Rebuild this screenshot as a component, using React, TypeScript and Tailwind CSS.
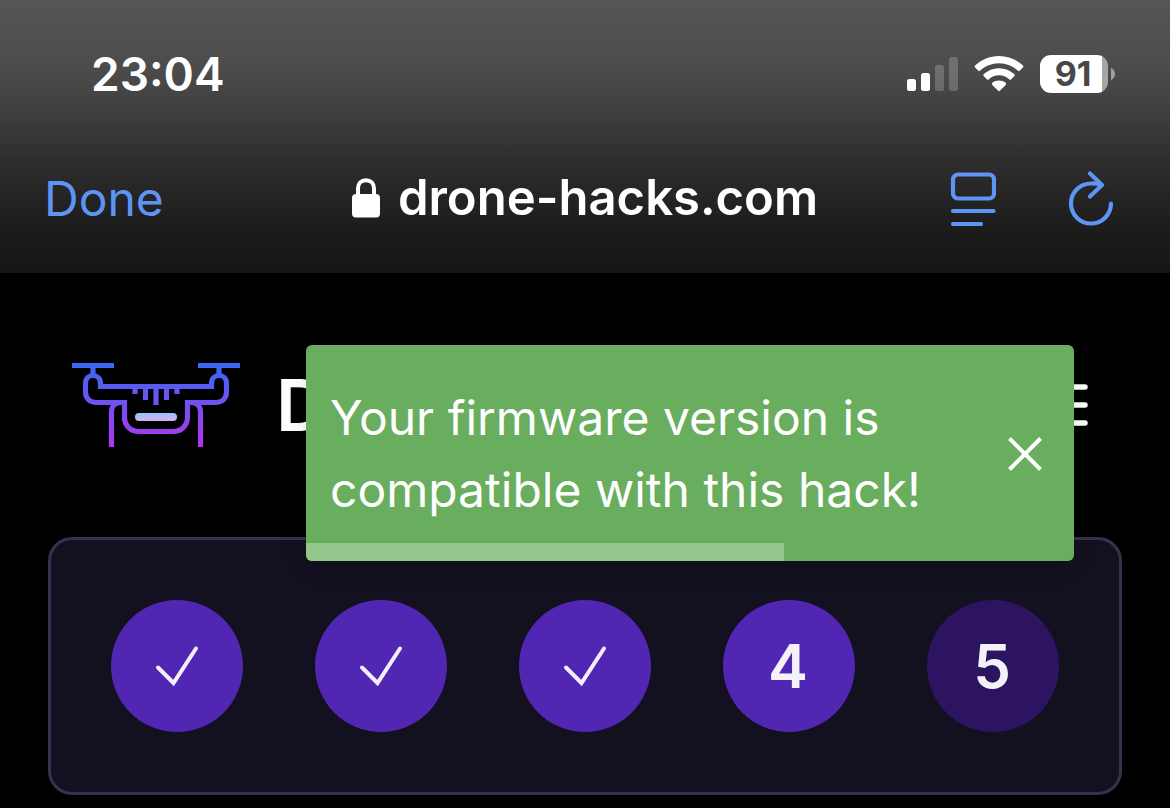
import React from "react";

function SignalIcon() {
  return (
    <svg width="51" height="34" viewBox="0 0 51 34" fill="white" role="img" aria-label="Signal strength">
      <rect x="0" y="22" width="9" height="12" rx="2.5" />
      <rect x="14" y="16" width="9" height="18" rx="2.5" />
      <rect x="28" y="8" width="9" height="26" rx="2.5" opacity="0.2" />
      <rect x="42" y="0" width="9" height="34" rx="2.5" opacity="0.2" />
    </svg>
  );
}

function WifiIcon() {
  return (
    <svg width="50" height="38" viewBox="0 0 50 38" fill="white" role="img" aria-label="Wi-Fi">
      <path d="M25 1C15.700 1 7.300 4.600 1.100 10.500a1.400 1.400 0 0 0 0 2L4.100 15.600a1.500 1.500 0 0 0 2.100 0C11.100 11 17.700 8.200 25 8.200S38.900 11 43.800 15.600a1.500 1.500 0 0 0 2.100 0l3-3.100a1.400 1.400 0 0 0 0-2C42.700 4.600 34.300 1 25 1Z" />
      <path d="M25 13.200c-5.900 0-11.200 2.200-15.200 5.900a1.400 1.400 0 0 0 0 2.100l3 3a1.500 1.500 0 0 0 2.100 0C17.600 21.800 21.100 20.300 25 20.300s7.400 1.500 10.100 3.900a1.500 1.500 0 0 0 2.100 0l3-3a1.400 1.400 0 0 0 0-2.100c-4-3.700-9.300-5.900-15.200-5.900Z" />
      <path d="M25 25.500c-2.500 0-4.900.8-6.700 2.300a1.400 1.400 0 0 0 0 2.100l5.600 5.700a1.500 1.500 0 0 0 2.200 0l5.600-5.700a1.400 1.400 0 0 0 0-2.100C29.900 26.300 27.500 25.500 25 25.500Z" />
    </svg>
  );
}

function Battery() {
  return (
    <div className="flex items-center gap-[3px]">
      <div className="flex h-[38px] w-[68px] items-center justify-center rounded-[11px] bg-[linear-gradient(to_right,#ffffff_91%,#a5a5a5_91%)] pr-0.5 text-[34px] leading-none font-bold text-[#484848]">
        91
      </div>
      <svg width="4" height="12" viewBox="0 0 4 12" fill="#a0a0a0" aria-hidden="true">
        <path d="M0 0C2.500 1 4 3 4 6S2.500 11 0 12Z" />
      </svg>
    </div>
  );
}

function LockIcon() {
  return (
    <svg width="28" height="40" viewBox="0 0 28 40" fill="none" aria-hidden="true">
      <path d="M6 18V10.500C6 5.500 9.200 2.200 14 2.200s8 3.300 8 8.300V18" stroke="white" strokeWidth="4" />
      <rect x="0" y="16" width="28" height="23.500" rx="4" fill="white" />
    </svg>
  );
}

function ReaderIcon() {
  return (
    <svg width="46" height="54" viewBox="0 0 46 54" fill="none" stroke="#5e94f4" strokeWidth="4.2" strokeLinecap="round" aria-hidden="true">
      <rect x="3" y="2.500" width="41" height="24" rx="5" />
      <path d="M3 39H43.500M3 52H31" />
    </svg>
  );
}

function ReloadIcon() {
  return (
    <svg width="46" height="56" viewBox="0 0 46 56" fill="none" stroke="#5e94f4" strokeWidth="4.2" strokeLinecap="round" strokeLinejoin="round" aria-hidden="true">
      <path d="M43 32.500A20 20 0 1 1 23 12.500C27 12.300 30 12.700 33 13.500" />
      <path d="M22 2.500 34 14 22 25.500" />
    </svg>
  );
}

function DroneLogo() {
  return (
    <svg width="168" height="84" viewBox="0 0 168 84" fill="none" role="img" aria-label="Drone logo">
      <defs>
        <linearGradient id="frame" gradientUnits="userSpaceOnUse" x1="0" y1="0" x2="0" y2="84">
          <stop offset="0" stopColor="#366af4" />
          <stop offset="1" stopColor="#b335eb" />
        </linearGradient>
        <linearGradient id="light" gradientUnits="userSpaceOnUse" x1="0" y1="50" x2="0" y2="58">
          <stop offset="0" stopColor="#91c3fb" />
          <stop offset="1" stopColor="#d6b1f1" />
        </linearGradient>
      </defs>
      <g fill="url(#frame)">
        <rect x="0" y="0" width="42" height="5" />
        <rect x="126" y="0" width="42" height="5" />
      </g>
      <g stroke="url(#frame)" strokeWidth="5.2">
        <path d="M21 4V12M147 4V12" />
        <path d="M52.500 57V39.500H24.500C17.500 39.500 13.500 35 13.500 29V20.500C13.500 15.500 17 12.500 21 12.500S28.500 15.500 28.500 20.500V23.500H139.500V20.500C139.500 15.500 143 12.500 147 12.500S154.500 15.500 154.500 20.500V29C154.500 35 150.500 39.500 143.500 39.500H115.500V54C115.500 63 109 68.500 101 68.500H67C59 68.500 52.500 63 52.500 54" />
        <path d="M39.500 84V49C39.500 43 43 39.500 49 39.500M128.500 84V49C128.500 43 125 39.500 119 39.500" />
        <path d="M63 24V31M73.500 24V37M84 24V42M94.500 24V37M105 24V31" />
      </g>
      <rect x="63" y="50" width="42" height="8" rx="4" fill="url(#light)" />
    </svg>
  );
}

function MenuIcon() {
  return (
    <svg width="54" height="54" viewBox="0 0 54 54" stroke="white" strokeWidth="5.500" strokeLinecap="round" aria-hidden="true">
      <path d="M8 9H49M8 27H49M8 45H49" />
    </svg>
  );
}

function CheckIcon() {
  return (
    <svg width="48" height="48" viewBox="0 0 48 48" fill="none" stroke="#f4effc" strokeWidth="4" strokeLinecap="round" aria-label="Completed" role="img">
      <path d="M5 25.500 20.500 41 43 6.500" />
    </svg>
  );
}

const steps = [
  { id: 1, state: "done" },
  { id: 2, state: "done" },
  { id: 3, state: "done" },
  { id: 4, state: "current" },
  { id: 5, state: "upcoming" },
];

function Stepper() {
  return (
    <ol className="mx-12 flex justify-between rounded-3xl border-3 border-[#37304f] bg-[#13101f] p-15">
      {steps.map((step) => (
        <li
          key={step.id}
          aria-current={step.state === "current" ? "step" : undefined}
          className={
            step.state === "upcoming"
              ? "flex size-33 items-center justify-center rounded-full bg-[#2d1461] pr-0.5 text-[60px] leading-none font-semibold text-[#f4f2f9]"
              : step.state === "current"
                ? "flex size-33 items-center justify-center rounded-full bg-[#5126b2] pr-0.5 text-[60px] leading-none font-semibold text-[#f4f2f9]"
                : "flex size-33 items-center justify-center rounded-full bg-[#5126b2]"
          }
        >
          {step.state === "done" ? <CheckIcon /> : step.id}
        </li>
      ))}
    </ol>
  );
}

function Toast() {
  return (
    <div
      role="status"
      className="absolute top-18 right-24 left-[306px] overflow-hidden rounded-md bg-[#69ae5e] shadow-[0_3px_30px_rgba(0,0,0,0.1)]"
    >
      <div className="flex items-center justify-between pt-[37px] pr-[25px] pb-[35px] pl-6">
        <p className="text-5xl leading-[72px] text-white">
          Your firmware version is
          <br />
          compatible with this hack!
        </p>
        <button type="button" aria-label="Close" className="flex size-12 items-center justify-center">
          <svg width="34" height="34" viewBox="0 0 34 34" stroke="white" strokeWidth="4" aria-hidden="true">
            <path d="M1.500 1.500 32.500 32.500M32.500 1.500 1.500 32.500" />
          </svg>
        </button>
      </div>
      <div className="absolute inset-x-0 bottom-0 h-[18px]">
        <div className="h-full bg-[#93c68b]" style={{ width: "62.2%" }} />
      </div>
    </div>
  );
}

export default function App() {
  return (
    <div className="min-h-screen overflow-hidden bg-black font-['Inter',sans-serif] text-white">
      <header className="bg-[linear-gradient(to_bottom,#555555_0%,#4c4c4c_25%,#3d3d3d_43%,#2d2d2d_60%,#1c1c1c_84%,#161616_100%)]">
        <div className="flex h-[148px] items-center justify-between pr-[55px] pl-[91px]">
          <time className="text-[46px] leading-none font-semibold">23:04</time>
          <div className="flex items-center gap-4">
            <SignalIcon />
            <WifiIcon />
            <Battery />
          </div>
        </div>
        <nav className="grid h-[125px] grid-cols-[1fr_auto_1fr] items-start px-11 pt-[23px]">
          <button type="button" className="justify-self-start text-5xl leading-[56px] text-[#5e94f4]">
            Done
          </button>
          <div className="flex items-center gap-[18px]">
            <LockIcon />
            <span className="text-[49px] leading-[54px] font-semibold">drone-hacks.com</span>
          </div>
          <div className="flex items-center gap-[72px] justify-self-end pr-3">
            <button type="button" aria-label="Reader view">
              <ReaderIcon />
            </button>
            <button type="button" aria-label="Reload">
              <ReloadIcon />
            </button>
          </div>
        </nav>
      </header>
      <main className="relative">
        <div className="flex h-[264px] items-center justify-between pr-20 pl-18">
          <a href="#" className="flex items-center gap-9">
            <DroneLogo />
            <span className="text-7xl font-semibold">Drone-Hacks</span>
          </a>
          <button type="button" aria-label="Open menu">
            <MenuIcon />
          </button>
        </div>
        <Stepper />
        <Toast />
      </main>
    </div>
  );
}
